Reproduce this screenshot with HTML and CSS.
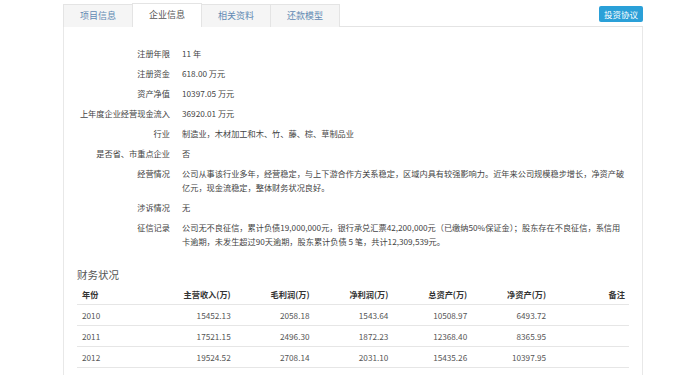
FILE: index.html
```html
<!DOCTYPE html>
<html lang="zh-CN">
<head>
  <meta charset="UTF-8">
  <meta name="viewport" content="width=device-width, initial-scale=1.0">
  <title>企业信息</title>
  <link rel="stylesheet" href="styles.css">
</head>
<body>
  <div class="page">
    <div class="tabbar">
      <a class="tab">项目信息</a>
      <a class="tab active">企业信息</a>
      <a class="tab">相关资料</a>
      <a class="tab">还款模型</a>
      <button class="btn-agreement">投资协议</button>
    </div>

    <div class="panel">
      <div class="info-row"><span class="label">注册年限</span><span class="value">11 年</span></div>
      <div class="info-row"><span class="label">注册资金</span><span class="value">618.00 万元</span></div>
      <div class="info-row"><span class="label">资产净值</span><span class="value">10397.05 万元</span></div>
      <div class="info-row"><span class="label">上年度企业经营现金流入</span><span class="value">36920.01 万元</span></div>
      <div class="info-row"><span class="label">行业</span><span class="value">制造业，木材加工和木、竹、藤、棕、草制品业</span></div>
      <div class="info-row"><span class="label">是否省、市重点企业</span><span class="value">否</span></div>
      <div class="info-row"><span class="label">经营情况</span><span class="value">公司从事该行业多年，经营稳定，与上下游合作方关系稳定，区域内具有较强影响力。近年来公司规模稳步增长，净资产破亿元，现金流稳定，整体财务状况良好。</span></div>
      <div class="info-row"><span class="label">涉诉情况</span><span class="value">无</span></div>
      <div class="info-row"><span class="label">征信记录</span><span class="value">公司无不良征信，累计负债19,000,000元，银行承兑汇票42,200,000元（已缴纳50%保证金）；股东存在不良征信，系信用卡逾期，未发生超过90天逾期，股东累计负债 5 笔，共计12,309,539元。</span></div>

      <h2 class="section-title">财务状况</h2>
      <table class="finance">
        <thead>
          <tr>
            <th class="left">年份</th>
            <th>主营收入(万)</th>
            <th>毛利润(万)</th>
            <th>净利润(万)</th>
            <th>总资产(万)</th>
            <th>净资产(万)</th>
            <th>备注</th>
          </tr>
        </thead>
        <tbody>
          <tr><td class="left">2010</td><td>15452.13</td><td>2058.18</td><td>1543.64</td><td>10508.97</td><td>6493.72</td><td></td></tr>
          <tr><td class="left">2011</td><td>17521.15</td><td>2496.30</td><td>1872.23</td><td>12368.40</td><td>8365.95</td><td></td></tr>
          <tr><td class="left">2012</td><td>19524.52</td><td>2708.14</td><td>2031.10</td><td>15435.26</td><td>10397.95</td><td></td></tr>
        </tbody>
      </table>
    </div>
  </div>
</body>
</html>
```

FILE: styles.css
```css
body {
  margin: 0;
  background-color: #fff;
  font-family: "Noto Sans CJK SC", sans-serif;
  color: #444;
}

.page {
  width: 580px;
  margin-left: 63px;
  padding-top: 3px;
}

.tabbar {
  display: flex;
  align-items: flex-end;
  height: 23px;
  border-bottom: 1px solid #e4e4e4;
}

.tab {
  height: 22px;
  line-height: 22px;
  padding: 0 16px;
  margin-bottom: -1px;
  margin-right: -1px;
  border: 1px solid #e4e4e4;
  border-bottom: none;
  background-color: #f5f5f5;
  color: #6189b3;
  font-size: 9px;
  cursor: pointer;
}

.tab.active {
  height: 23px;
  background-color: #fff;
  color: #555;
}

.btn-agreement {
  align-self: center;
  margin-left: auto;
  height: 16px;
  padding: 0 5px;
  border: none;
  border-radius: 2px;
  background-color: #2aa0d8;
  color: #fff;
  font-family: inherit;
  font-size: 8.5px;
  line-height: 16px;
  margin-bottom: 2px;
}

.panel {
  border-left: 1px solid #e8e8e8;
  border-right: 1px solid #e8e8e8;
  padding: 19px 13px 40px 13px;
  min-height: 400px;
}

.info-row {
  display: grid;
  grid-template-columns: 93px 443px;
  column-gap: 12px;
  margin-bottom: 6px;
  font-size: 8.2px;
  line-height: 14px;
}

.label {
  text-align: right;
}

.section-title {
  margin: 20px 0 0 0;
  font-size: 10.5px;
  font-weight: normal;
  line-height: 14px;
  color: #555;
}

.finance {
  width: 552px;
  margin-top: 2px;
  border-collapse: collapse;
  table-layout: fixed;
  font-size: 8.2px;
}

.finance th,
.finance td {
  text-align: right;
  padding: 0 4px 0 5px;
  border-bottom: 1px solid #e6e6e6;
}

.finance th {
  height: 20px;
  font-weight: bold;
  color: #333;
}

.finance td {
  height: 20px;
  color: #555;
}

.finance .left {
  text-align: left;
}
```
